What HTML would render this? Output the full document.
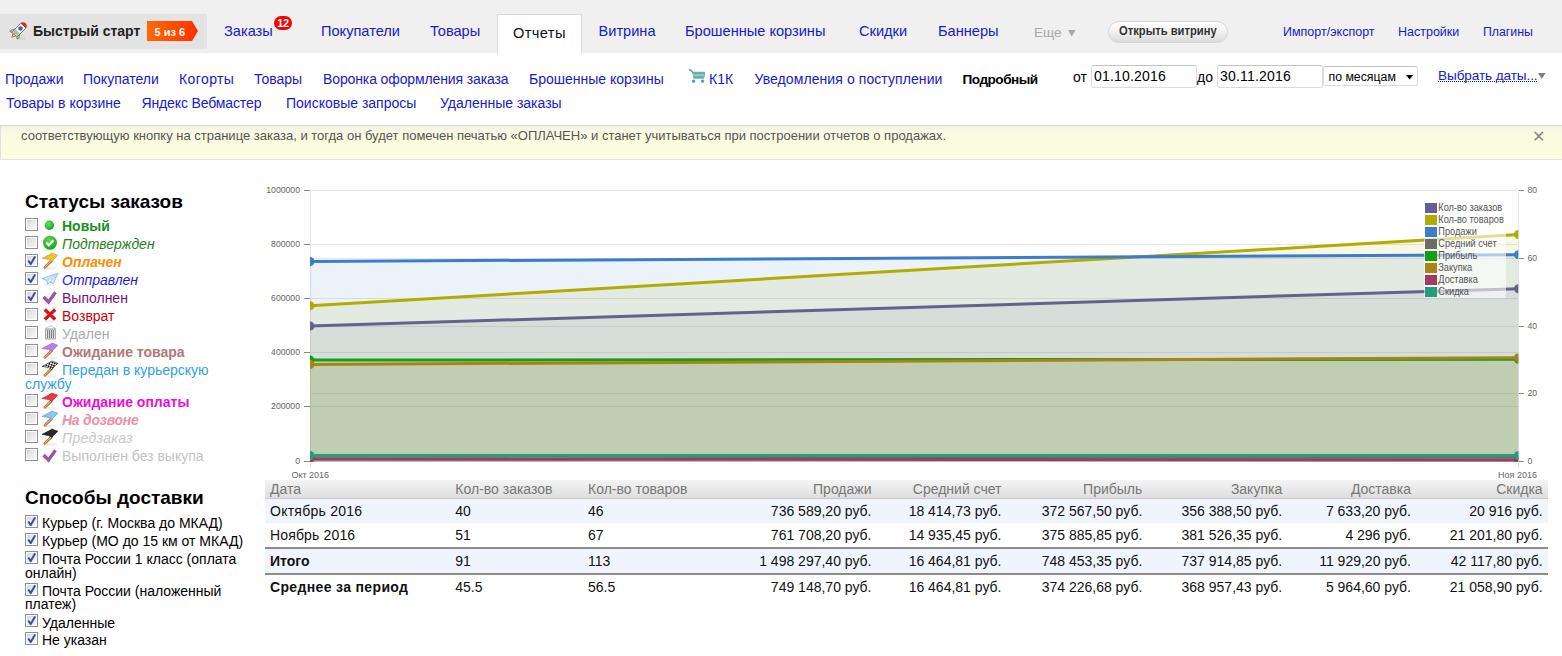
<!DOCTYPE html>
<html><head><meta charset="utf-8">
<style>
*{box-sizing:border-box}
html,body{margin:0;padding:0;width:1562px;height:656px;overflow:hidden;background:#fff;font-family:"Liberation Sans",sans-serif;}
.a{position:absolute;white-space:nowrap;line-height:1}
a,.lk{color:#1420cc;text-decoration:none}
#top{position:absolute;left:0;top:0;width:1562px;height:53px;background:#f0f0f0}
#qs{position:absolute;left:0;top:14px;width:207px;height:35px;background:#e3e3e3}
.tn{font-size:14.6px;top:24.3px}
.sn{font-size:14px}
#note{position:absolute;left:0;top:125px;width:1562px;height:35px;background:linear-gradient(#f3f3e3,#fbfbe2 9px,#fdfde0);border-top:1px solid #d8d8d8;border-bottom:1px solid #e4e4e0;border-left:1px solid #e0e0e0}
.st{font-size:14px}
.cb{position:absolute;width:13px;height:13px;border:1px solid #8f8f8f;background:linear-gradient(135deg,#cfd3da 0%,#e9eaec 50%,#fbfbfb 100%);box-shadow:inset 0 0 0 1px #fff}
.cb svg{position:absolute;left:-1px;top:-1px}
table{border-collapse:collapse}
</style></head><body>
<div id="top">
  <div id="qs"></div>
</div>
<!-- rocket -->
<svg class="a" style="left:8px;top:19px" width="22" height="22" viewBox="-11 -11 22 22">
 <ellipse cx="2" cy="8.5" rx="5" ry="1.3" fill="#000" fill-opacity="0.07"/>
 <g transform="rotate(45) translate(0,0.5)">
  <path d="M-2.3 6 L0 10.5 L2.3 6 Z" fill="#f04020"/>
  <path d="M-1.3 6 L0 9 L1.3 6 Z" fill="#ffd040"/>
  <path d="M-3.5 1.5 L-5.5 5.5 L-5.5 7 L-3 6 Z M3.5 1.5 L5.5 5.5 L5.5 7 L3 6 Z" fill="#c8d0c8" stroke="#6a6a6a" stroke-width="0.8"/>
  <rect x="-3.5" y="-7" width="7" height="13" rx="0.8" fill="#f2f2f4" stroke="#6e6e6e" stroke-width="0.9"/>
  <rect x="-3" y="1.5" width="6" height="4" fill="#a8c2a2"/>
  <path d="M-3.5 -6.5 L-3.5 -8 Q0 -12 3.5 -8 L3.5 -6.5 Z" fill="#de2a22"/>
  <circle cx="0" cy="-2.6" r="1.9" fill="#4a64b0" stroke="#334" stroke-width="0.4"/>
 </g>
</svg>
<div class="a" style="left:33px;top:24px;font-size:14px;font-weight:bold;color:#222">Быстрый старт</div>
<svg class="a" style="left:147px;top:21px" width="51" height="20" viewBox="0 0 51 20">
  <defs><linearGradient id="og" x1="0" x2="1"><stop offset="0" stop-color="#ff6a00"/><stop offset="1" stop-color="#ff3000"/></linearGradient></defs>
  <path d="M0 0 H45 L51 10 L45 20 H0 Z" fill="url(#og)"/>
</svg>
<div class="a" style="left:154.5px;top:27px;font-size:11px;font-weight:bold;color:#fff">5 из 6</div>

<div class="a lk tn" style="left:224px">Заказы</div>
<div class="a" style="left:274px;top:16px;width:18px;height:14px;border-radius:7px;background:#f60000;color:#fff;font-size:11px;font-weight:bold;text-align:center;line-height:14px;letter-spacing:-0.3px">12</div>
<div class="a lk tn" style="left:321px">Покупатели</div>
<div class="a lk tn" style="left:430px">Товары</div>
<div class="a" style="left:497px;top:14px;width:85px;height:40px;background:#fff;border:1px solid #dadada;border-bottom:none"></div>
<div class="a tn" style="left:513px;top:25.5px;color:#111;letter-spacing:0.4px">Отчеты</div>
<div class="a lk tn" style="left:598.5px">Витрина</div>
<div class="a lk tn" style="left:685px">Брошенные корзины</div>
<div class="a lk tn" style="left:859px">Скидки</div>
<div class="a lk tn" style="left:938px">Баннеры</div>
<div class="a tn" style="left:1034px;color:#a8a8a8;font-size:13.6px;top:25.8px">Еще</div><svg class="a" style="left:1067.5px;top:29.5px" width="8" height="7"><path d="M0 0H7.5L3.75 6.5Z" fill="#a8a8a8"/></svg>
<div class="a" style="left:1108px;top:21px;width:120px;height:22px;border-radius:11px;background:linear-gradient(#ffffff,#f3f3f3 45%,#dadada);border:1px solid #d6d6d6"></div>
<div class="a" style="left:1119px;top:25.4px;font-size:12.6px;font-weight:bold;color:#333;transform:scaleX(0.89);transform-origin:0 0">Открыть витрину</div>
<div class="a lk" style="left:1283px;top:26.3px;font-size:12.5px">Импорт/экспорт</div>
<div class="a lk" style="left:1398px;top:26.3px;font-size:12.5px">Настройки</div>
<div class="a lk" style="left:1483px;top:26.3px;font-size:12.3px">Плагины</div>

<!-- subnav -->
<div class="a lk sn" style="left:5px;top:72px">Продажи</div>
<div class="a lk sn" style="left:83px;top:72px">Покупатели</div>
<div class="a lk sn" style="left:179px;top:72px;letter-spacing:0.4px">Когорты</div>
<div class="a lk sn" style="left:254px;top:72px">Товары</div>
<div class="a lk sn" style="left:323px;top:72px;letter-spacing:-0.12px">Воронка оформления заказа</div>
<div class="a lk sn" style="left:529px;top:72px">Брошенные корзины</div>
<div class="a lk sn" style="left:709px;top:72px">К1К</div><svg class="a" style="left:688px;top:69px" width="18" height="14" viewBox="0 0 18 14"><path d="M0.8 1 H2.5 L4.8 3.5" stroke="#4a9e9c" stroke-width="1.4" fill="none"/><path d="M4 2.8 H17 V6.2 L16 9.8 H5.6 Z" fill="#62b0ae"/><path d="M5 5.4 H16.4 V6.6 H5.3 Z" fill="#bfe0de"/><circle cx="5.6" cy="12.2" r="1.6" fill="#4fa3a1"/><circle cx="14.6" cy="12.2" r="1.6" fill="#4fa3a1"/></svg>
<div class="a lk sn" style="left:754.5px;top:72px;letter-spacing:0.08px">Уведомления о поступлении</div>
<div class="a" style="left:962.5px;top:73px;font-size:13.6px;letter-spacing:-0.5px;font-weight:bold;color:#000">Подробный</div>
<div class="a lk sn" style="left:6px;top:96px">Товары в корзине</div>
<div class="a lk sn" style="left:141.5px;top:96px;letter-spacing:-0.13px">Яндекс Вебмастер</div>
<div class="a lk sn" style="left:286px;top:96px">Поисковые запросы</div>
<div class="a lk sn" style="left:440px;top:96px">Удаленные заказы</div>

<div class="a sn" style="left:1073px;top:70px;color:#000">от</div>
<div class="a" style="left:1091px;top:65px;width:106px;height:23px;border:1px solid #dcdcdc;border-top-color:#c4c4c4;border-radius:3px;background:#fff"></div>
<div class="a sn" style="left:1094px;top:69px;color:#000;letter-spacing:0.2px">01.10.2016</div>
<div class="a sn" style="left:1197px;top:70px;color:#000">до</div>
<div class="a" style="left:1217px;top:65px;width:106px;height:23px;border:1px solid #dcdcdc;border-top-color:#c4c4c4;border-radius:3px;background:#fff"></div>
<div class="a sn" style="left:1220px;top:69px;color:#000;letter-spacing:0.2px">30.11.2016</div>
<div class="a" style="left:1323px;top:66px;width:95px;height:20px;border:1px solid #dcdcdc;border-top-color:#c4c4c4;border-radius:3px;background:#fff"></div>
<div class="a" style="left:1328.5px;top:70.5px;font-size:12.3px;color:#000">по месяцам</div>
<svg class="a" style="left:1406px;top:74.5px" width="8" height="5"><path d="M0 0H7.2L3.6 4.6Z" fill="#000"/></svg>
<div class="a lk" style="left:1438px;top:69px;font-size:13.6px;letter-spacing:-0.1px">Выбрать даты...</div><div class="a" style="left:1438px;top:80.6px;width:99px;height:0;border-top:1px dotted #1420cc"></div>
<svg class="a" style="left:1538.3px;top:73px" width="8" height="7"><path d="M0 0H7.6L3.8 6Z" fill="#808080"/></svg>

<div id="note"></div>
<div class="a" style="left:21px;top:129px;font-size:13px;color:#555">соответствующую кнопку на странице заказа, и тогда он будет помечен печатью «ОПЛАЧЕН» и станет учитываться при построении отчетов о продажах.</div>
<div class="a" style="left:1532.4px;top:129px;font-size:16px;color:#868686">✕</div>

<!-- SIDEBAR -->
<div class="a" style="left:25px;top:191.9px;font-size:19px;font-weight:bold;color:#000">Статусы заказов</div>
<div class="cb" style="left:25px;top:218.0px"></div>
<svg class="a" style="left:40px;top:214.0px" width="20" height="20" viewBox="0 0 20 20"><defs><radialGradient id="gd" cx="0.4" cy="0.35" r="0.7"><stop offset="0" stop-color="#6ee06e"/><stop offset="1" stop-color="#12a012"/></radialGradient></defs><circle cx="9.4" cy="11.3" r="4.7" fill="url(#gd)"/></svg>
<div class="a" style="left:62px;top:219.1px;font-size:14px;color:#1a8f1a;font-weight:bold">Новый</div>
<div class="cb" style="left:25px;top:236.0px"></div>
<svg class="a" style="left:40px;top:232.0px" width="20" height="20" viewBox="0 0 20 20"><defs><radialGradient id="gc" cx="0.45" cy="0.3" r="0.75"><stop offset="0" stop-color="#5fd85f"/><stop offset="1" stop-color="#0fa00f"/></radialGradient></defs><ellipse cx="10" cy="17.8" rx="6" ry="1" fill="#000" fill-opacity="0.08"/><circle cx="10" cy="10.8" r="7" fill="url(#gc)"/><path d="M6.2 10.6 L8.7 13.2 L13.3 8.4" stroke="#fff" stroke-width="2.3" fill="none"/></svg>
<div class="a" style="left:62px;top:237.1px;font-size:14px;color:#1f7f1f;font-style:italic">Подтвержден</div>
<div class="cb" style="left:25px;top:254.0px"><svg width="13" height="13" viewBox="0 0 13 13"><path d="M3.7 7.2 L5.8 10.1 L9.8 3" stroke="#3b4f9e" stroke-width="2" fill="none" stroke-linecap="round" stroke-linejoin="round"/></svg></div>
<svg class="a" style="left:40px;top:250.0px" width="20" height="20" viewBox="0 0 20 20"><ellipse cx="11" cy="18.3" rx="7" ry="1.2" fill="#000" fill-opacity="0.07"/><path d="M11.3 11 L4.9 17.3" stroke="#a86c32" stroke-width="2.7" stroke-linecap="round"/><path d="M11.1 10.9 L4.9 17.1" stroke="#e2b070" stroke-width="1.3" stroke-linecap="round"/><path d="M2 8.4 L10 4.3 L11.8 3 L17.8 5.2 L11.8 11.4 L8.5 9.6 Z" fill="#f0c030" stroke="#d8a010" stroke-width="0.6"/></svg>
<div class="a" style="left:62px;top:255.1px;font-size:14px;color:#ff8c00;font-weight:bold;font-style:italic">Оплачен</div>
<div class="cb" style="left:25px;top:272.0px"><svg width="13" height="13" viewBox="0 0 13 13"><path d="M3.7 7.2 L5.8 10.1 L9.8 3" stroke="#3b4f9e" stroke-width="2" fill="none" stroke-linecap="round" stroke-linejoin="round"/></svg></div>
<svg class="a" style="left:40px;top:268.0px" width="20" height="20" viewBox="0 0 20 20"><ellipse cx="9" cy="17" rx="6" ry="1" fill="#000" fill-opacity="0.07"/><path d="M18.2 5 L2 10.6 L6.6 12.4 L7.6 16.2 L10 14 L13.2 15.6 Z" fill="#d4ecf8" stroke="#86bede" stroke-width="0.9" stroke-linejoin="round"/><path d="M18.2 5 L6.6 12.4 M18.2 5 L10 14" stroke="#9ccbe6" stroke-width="0.7"/></svg>
<div class="a" style="left:62px;top:273.1px;font-size:14px;color:#1d1ddd;font-style:italic">Отправлен</div>
<div class="cb" style="left:25px;top:290.0px"><svg width="13" height="13" viewBox="0 0 13 13"><path d="M3.7 7.2 L5.8 10.1 L9.8 3" stroke="#3b4f9e" stroke-width="2" fill="none" stroke-linecap="round" stroke-linejoin="round"/></svg></div>
<svg class="a" style="left:40px;top:286.0px" width="20" height="20" viewBox="0 0 20 20"><ellipse cx="10" cy="18" rx="6" ry="1" fill="#000" fill-opacity="0.07"/><path d="M3.6 11 L8.5 16 L15.5 6.2" stroke="#9a55a6" stroke-width="3.3" fill="none"/></svg>
<div class="a" style="left:62px;top:291.1px;font-size:14px;color:#800a80">Выполнен</div>
<div class="cb" style="left:25px;top:308.0px"></div>
<svg class="a" style="left:40px;top:304.0px" width="20" height="20" viewBox="0 0 20 20"><ellipse cx="10" cy="17.5" rx="6" ry="1" fill="#000" fill-opacity="0.07"/><path d="M4.8 5.6 L15.2 15.4 M15.2 5.6 L4.8 15.4" stroke="#cf1b1b" stroke-width="3.4"/></svg>
<div class="a" style="left:62px;top:309.1px;font-size:14px;color:#cc0000">Возврат</div>
<div class="cb" style="left:25px;top:325.5px"></div>
<svg class="a" style="left:40px;top:321.5px" width="20" height="20" viewBox="0 0 20 20"><path d="M5.6 7 H15.4 V17 H5.6 Z" fill="#e2e2e2" stroke="#8a8a8a" stroke-width="0.8"/><path d="M7.6 8 V16 M9.6 8 V16 M11.5 8 V16 M13.4 8 V16" stroke="#7a7a7a" stroke-width="1"/><path d="M5 6.5 L10.5 3.8 L16 6.5 Z" fill="#fff" stroke="#a8c8c0" stroke-width="0.8"/></svg>
<div class="a" style="left:62px;top:326.6px;font-size:14px;color:#aaaaaa">Удален</div>
<div class="cb" style="left:25px;top:343.5px"></div>
<svg class="a" style="left:40px;top:339.5px" width="20" height="20" viewBox="0 0 20 20"><ellipse cx="11" cy="18.3" rx="7" ry="1.2" fill="#000" fill-opacity="0.07"/><path d="M11.3 11 L4.9 17.3" stroke="#a86c32" stroke-width="2.7" stroke-linecap="round"/><path d="M11.1 10.9 L4.9 17.1" stroke="#e2b070" stroke-width="1.3" stroke-linecap="round"/><path d="M2 8.4 L10 4.3 L11.8 3 L17.8 5.2 L11.8 11.4 L8.5 9.6 Z" fill="#b883dc" stroke="#9a60c8" stroke-width="0.6"/></svg>
<div class="a" style="left:62px;top:344.6px;font-size:14px;color:#b07878;font-weight:bold">Ожидание товара</div>
<div class="cb" style="left:25px;top:362.0px"></div>
<svg class="a" style="left:40px;top:358.0px" width="20" height="20" viewBox="0 0 20 20"><ellipse cx="11" cy="18.3" rx="7" ry="1.2" fill="#000" fill-opacity="0.07"/><path d="M11.3 11 L4.9 17.3" stroke="#a86c32" stroke-width="2.7" stroke-linecap="round"/><path d="M11.1 10.9 L4.9 17.1" stroke="#e2b070" stroke-width="1.3" stroke-linecap="round"/><defs><pattern id="chk" width="3.4" height="3.4" patternUnits="userSpaceOnUse" patternTransform="rotate(-25)"><rect width="3.4" height="3.4" fill="#fff"/><rect width="1.7" height="1.7" fill="#111"/><rect x="1.7" y="1.7" width="1.7" height="1.7" fill="#111"/></pattern></defs><path d="M2 8.4 L10 4.3 L11.8 3 L17.8 5.2 L11.8 11.4 L8.5 9.6 Z" fill="url(#chk)" stroke="#222" stroke-width="0.6"/></svg>
<div class="a" style="left:62px;top:363.1px;font-size:14px;color:#2ea0e8">Передан в курьерскую</div>
<div class="cb" style="left:25px;top:393.5px"></div>
<svg class="a" style="left:40px;top:389.5px" width="20" height="20" viewBox="0 0 20 20"><ellipse cx="11" cy="18.3" rx="7" ry="1.2" fill="#000" fill-opacity="0.07"/><path d="M11.3 11 L4.9 17.3" stroke="#a86c32" stroke-width="2.7" stroke-linecap="round"/><path d="M11.1 10.9 L4.9 17.1" stroke="#e2b070" stroke-width="1.3" stroke-linecap="round"/><path d="M2 8.4 L10 4.3 L11.8 3 L17.8 5.2 L11.8 11.4 L8.5 9.6 Z" fill="#e23c44" stroke="#c82028" stroke-width="0.6"/></svg>
<div class="a" style="left:62px;top:394.6px;font-size:14px;color:#f00cd8;font-weight:bold">Ожидание оплаты</div>
<div class="cb" style="left:25px;top:412.0px"></div>
<svg class="a" style="left:40px;top:408.0px" width="20" height="20" viewBox="0 0 20 20"><ellipse cx="11" cy="18.3" rx="7" ry="1.2" fill="#000" fill-opacity="0.07"/><path d="M11.3 11 L4.9 17.3" stroke="#a86c32" stroke-width="2.7" stroke-linecap="round"/><path d="M11.1 10.9 L4.9 17.1" stroke="#e2b070" stroke-width="1.3" stroke-linecap="round"/><path d="M2 8.4 L10 4.3 L11.8 3 L17.8 5.2 L11.8 11.4 L8.5 9.6 Z" fill="#8cc4f0" stroke="#4f94d0" stroke-width="0.6"/></svg>
<div class="a" style="left:62px;top:413.1px;font-size:14px;color:#ee90a8;font-weight:bold;font-style:italic;letter-spacing:-0.25px">На дозвоне</div>
<div class="cb" style="left:25px;top:429.8px"></div>
<svg class="a" style="left:40px;top:425.8px" width="20" height="20" viewBox="0 0 20 20"><ellipse cx="11" cy="18.3" rx="7" ry="1.2" fill="#000" fill-opacity="0.07"/><path d="M11.3 11 L4.9 17.3" stroke="#a86c32" stroke-width="2.7" stroke-linecap="round"/><path d="M11.1 10.9 L4.9 17.1" stroke="#e2b070" stroke-width="1.3" stroke-linecap="round"/><path d="M2 8.4 L10 4.3 L11.8 3 L17.8 5.2 L11.8 11.4 L8.5 9.6 Z" fill="#2a2a2a" stroke="#111" stroke-width="0.6"/></svg>
<div class="a" style="left:62px;top:430.9px;font-size:14px;color:#c6c6c6;font-style:italic;letter-spacing:0.3px">Предзаказ</div>
<div class="cb" style="left:25px;top:447.8px"></div>
<svg class="a" style="left:40px;top:443.8px" width="20" height="20" viewBox="0 0 20 20"><ellipse cx="10" cy="18" rx="6" ry="1" fill="#000" fill-opacity="0.07"/><path d="M3.6 11 L8.5 16 L15.5 6.2" stroke="#9a55a6" stroke-width="3.3" fill="none"/></svg>
<div class="a" style="left:62px;top:448.9px;font-size:14px;color:#c2c2c2">Выполнен без выкупа</div>
<div class="a" style="left:25px;top:377.1px;font-size:14px;color:#2ea0e8">службу</div>
<div class="a" style="left:25px;top:487.5px;font-size:19px;font-weight:bold;color:#000">Способы доставки</div>
<div class="cb" style="left:25px;top:515.0px"><svg width="13" height="13" viewBox="0 0 13 13"><path d="M3.7 7.2 L5.8 10.1 L9.8 3" stroke="#3b4f9e" stroke-width="2" fill="none" stroke-linecap="round" stroke-linejoin="round"/></svg></div>
<div class="a" style="left:42px;top:516.1px;font-size:14px;color:#000">Курьер (г. Москва до МКАД)</div>
<div class="cb" style="left:25px;top:533.0px"><svg width="13" height="13" viewBox="0 0 13 13"><path d="M3.7 7.2 L5.8 10.1 L9.8 3" stroke="#3b4f9e" stroke-width="2" fill="none" stroke-linecap="round" stroke-linejoin="round"/></svg></div>
<div class="a" style="left:42px;top:534.1px;font-size:14px;color:#000">Курьер (МО до 15 км от МКАД)</div>
<div class="cb" style="left:25px;top:551.0px"><svg width="13" height="13" viewBox="0 0 13 13"><path d="M3.7 7.2 L5.8 10.1 L9.8 3" stroke="#3b4f9e" stroke-width="2" fill="none" stroke-linecap="round" stroke-linejoin="round"/></svg></div>
<div class="a" style="left:42px;top:552.1px;font-size:14px;color:#000">Почта России 1 класс (оплата</div>
<div class="a" style="left:25px;top:565.7px;font-size:14px;color:#000">онлайн)</div>
<div class="cb" style="left:25px;top:582.6px"><svg width="13" height="13" viewBox="0 0 13 13"><path d="M3.7 7.2 L5.8 10.1 L9.8 3" stroke="#3b4f9e" stroke-width="2" fill="none" stroke-linecap="round" stroke-linejoin="round"/></svg></div>
<div class="a" style="left:42px;top:583.7px;font-size:14px;color:#000">Почта России (наложенный</div>
<div class="a" style="left:25px;top:597.3px;font-size:14px;color:#000">платеж)</div>
<div class="cb" style="left:25px;top:614.3px"><svg width="13" height="13" viewBox="0 0 13 13"><path d="M3.7 7.2 L5.8 10.1 L9.8 3" stroke="#3b4f9e" stroke-width="2" fill="none" stroke-linecap="round" stroke-linejoin="round"/></svg></div>
<div class="a" style="left:42px;top:616.1px;font-size:14px;color:#000">Удаленные</div>
<div class="cb" style="left:25px;top:631.6px"><svg width="13" height="13" viewBox="0 0 13 13"><path d="M3.7 7.2 L5.8 10.1 L9.8 3" stroke="#3b4f9e" stroke-width="2" fill="none" stroke-linecap="round" stroke-linejoin="round"/></svg></div>
<div class="a" style="left:42px;top:633.4px;font-size:14px;color:#000">Не указан</div>

<!-- CHART -->
<svg class="a" style="left:0;top:0" width="1562" height="656" viewBox="0 0 1562 656">
<defs><clipPath id="pc"><rect x="310" y="185" width="1208.2" height="277"/></clipPath></defs>
<line x1="310" x2="1518.5" y1="190.5" y2="190.5" stroke="#e6e6e6" stroke-width="1"/>
<line x1="310" x2="1518.5" y1="244.5" y2="244.5" stroke="#e6e6e6" stroke-width="1"/>
<line x1="310" x2="1518.5" y1="298.5" y2="298.5" stroke="#e6e6e6" stroke-width="1"/>
<line x1="310" x2="1518.5" y1="352.5" y2="352.5" stroke="#e6e6e6" stroke-width="1"/>
<line x1="310" x2="1518.5" y1="406.5" y2="406.5" stroke="#e6e6e6" stroke-width="1"/>
<line x1="310" x2="1518.5" y1="461.5" y2="461.5" stroke="#e6e6e6" stroke-width="1"/>
<line x1="310" x2="1518.5" y1="190.5" y2="190.5" stroke="#e6e6e6" stroke-width="1"/>
<line x1="310" x2="1518.5" y1="258.5" y2="258.5" stroke="#e6e6e6" stroke-width="1"/>
<line x1="310" x2="1518.5" y1="326.5" y2="326.5" stroke="#e6e6e6" stroke-width="1"/>
<line x1="310" x2="1518.5" y1="393.5" y2="393.5" stroke="#e6e6e6" stroke-width="1"/>
<line x1="310" x2="1518.5" y1="461.5" y2="461.5" stroke="#e6e6e6" stroke-width="1"/>
<line x1="310.5" x2="310.5" y1="190" y2="467" stroke="#e4e4e4"/>
<line x1="1518.5" x2="1518.5" y1="190" y2="467" stroke="#e4e4e4"/>
<g clip-path="url(#pc)">
<path d="M310.0 326.0 L1518.5 288.7 L1518.5 461.5 L310.0 461.5 Z" fill="#675e94" fill-opacity="0.1"/>
<path d="M310.0 305.7 L1518.5 234.5 L1518.5 461.5 L310.0 461.5 Z" fill="#b3ac00" fill-opacity="0.1"/>
<path d="M310.0 261.5 L1518.5 254.7 L1518.5 461.5 L310.0 461.5 Z" fill="#3d7cc9" fill-opacity="0.1"/>
<path d="M310.0 456.1 L1518.5 457.1 L1518.5 461.5 L310.0 461.5 Z" fill="#6b6b6b" fill-opacity="0.1"/>
<path d="M310.0 360.1 L1518.5 359.2 L1518.5 461.5 L310.0 461.5 Z" fill="#12a012" fill-opacity="0.1"/>
<path d="M310.0 364.5 L1518.5 357.7 L1518.5 461.5 L310.0 461.5 Z" fill="#a88418" fill-opacity="0.1"/>
<path d="M310.0 459.0 L1518.5 459.9 L1518.5 461.5 L310.0 461.5 Z" fill="#a53a60" fill-opacity="0.1"/>
<path d="M310.0 455.4 L1518.5 455.4 L1518.5 461.5 L310.0 461.5 Z" fill="#1fa07a" fill-opacity="0.1"/>
<path d="M310.0 456.1 L1518.5 457.1" stroke="#6b6b6b" stroke-width="3" fill="none"/>
<circle cx="310.0" cy="456.1" r="4.5" fill="#6b6b6b"/><circle cx="1518.5" cy="457.1" r="4.5" fill="#6b6b6b"/>
<path d="M310.0 326.0 L1518.5 288.7" stroke="#63628c" stroke-width="3" fill="none"/>
<circle cx="310.0" cy="326.0" r="4.5" fill="#63628c"/><circle cx="1518.5" cy="288.7" r="4.5" fill="#63628c"/>
<path d="M310.0 305.7 L1518.5 234.5" stroke="#b3ac00" stroke-width="3" fill="none"/>
<circle cx="310.0" cy="305.7" r="4.5" fill="#b3ac00"/><circle cx="1518.5" cy="234.5" r="4.5" fill="#b3ac00"/>
<path d="M310.0 261.5 L1518.5 254.7" stroke="#3d7cc9" stroke-width="3" fill="none"/>
<circle cx="310.0" cy="261.5" r="4.5" fill="#3d7cc9"/><circle cx="1518.5" cy="254.7" r="4.5" fill="#3d7cc9"/>
<path d="M310.0 360.1 L1518.5 359.2" stroke="#12a012" stroke-width="3" fill="none"/>
<circle cx="310.0" cy="360.1" r="4.5" fill="#12a012"/><circle cx="1518.5" cy="359.2" r="4.5" fill="#12a012"/>
<path d="M310.0 364.5 L1518.5 357.7" stroke="#a88418" stroke-width="3" fill="none"/>
<circle cx="310.0" cy="364.5" r="4.5" fill="#a88418"/><circle cx="1518.5" cy="357.7" r="4.5" fill="#a88418"/>
<path d="M310.0 459.0 L1518.5 459.9" stroke="#a53a60" stroke-width="3" fill="none"/>
<circle cx="310.0" cy="459.0" r="4.5" fill="#a53a60"/><circle cx="1518.5" cy="459.9" r="4.5" fill="#a53a60"/>
<path d="M310.0 455.4 L1518.5 455.4" stroke="#1fa07a" stroke-width="3" fill="none"/>
<circle cx="310.0" cy="455.4" r="4.5" fill="#1fa07a"/><circle cx="1518.5" cy="455.4" r="4.5" fill="#1fa07a"/>
</g>
<line x1="304" x2="310" y1="190.5" y2="190.5" stroke="#888"/>
<text transform="translate(300,193.3) scale(0.885,1)" text-anchor="end" font-size="9.8" fill="#666" font-family="Liberation Sans">1000000</text>
<line x1="304" x2="310" y1="244.5" y2="244.5" stroke="#888"/>
<text transform="translate(300,247.3) scale(0.885,1)" text-anchor="end" font-size="9.8" fill="#666" font-family="Liberation Sans">800000</text>
<line x1="304" x2="310" y1="298.5" y2="298.5" stroke="#888"/>
<text transform="translate(300,301.3) scale(0.885,1)" text-anchor="end" font-size="9.8" fill="#666" font-family="Liberation Sans">600000</text>
<line x1="304" x2="310" y1="352.5" y2="352.5" stroke="#888"/>
<text transform="translate(300,355.3) scale(0.885,1)" text-anchor="end" font-size="9.8" fill="#666" font-family="Liberation Sans">400000</text>
<line x1="304" x2="310" y1="406.5" y2="406.5" stroke="#888"/>
<text transform="translate(300,409.3) scale(0.885,1)" text-anchor="end" font-size="9.8" fill="#666" font-family="Liberation Sans">200000</text>
<line x1="304" x2="310" y1="461.5" y2="461.5" stroke="#888"/>
<text transform="translate(300,464.3) scale(0.885,1)" text-anchor="end" font-size="9.8" fill="#666" font-family="Liberation Sans">0</text>
<line x1="1519" x2="1524" y1="190.5" y2="190.5" stroke="#888"/>
<text transform="translate(1527.5,192.9) scale(0.885,1)" font-size="9.8" fill="#666" font-family="Liberation Sans">80</text>
<line x1="1519" x2="1524" y1="258.5" y2="258.5" stroke="#888"/>
<text transform="translate(1527.5,260.9) scale(0.885,1)" font-size="9.8" fill="#666" font-family="Liberation Sans">60</text>
<line x1="1519" x2="1524" y1="326.5" y2="326.5" stroke="#888"/>
<text transform="translate(1527.5,328.9) scale(0.885,1)" font-size="9.8" fill="#666" font-family="Liberation Sans">40</text>
<line x1="1519" x2="1524" y1="393.5" y2="393.5" stroke="#888"/>
<text transform="translate(1527.5,395.9) scale(0.885,1)" font-size="9.8" fill="#666" font-family="Liberation Sans">20</text>
<line x1="1519" x2="1524" y1="461.5" y2="461.5" stroke="#888"/>
<text transform="translate(1527.5,463.9) scale(0.885,1)" font-size="9.8" fill="#666" font-family="Liberation Sans">0</text>
<text x="291.4" y="478.4" font-size="9" fill="#666" font-family="Liberation Sans">Окт 2016</text>
<text x="1498" y="478.4" font-size="9" fill="#666" font-family="Liberation Sans">Ноя 2016</text>
<rect x="1424" y="202" width="82" height="96" fill="#fff" fill-opacity="0.6"/>
<rect x="1425" y="203" width="12" height="10" fill="#675e94"/>
<text transform="translate(1438.3,211.4) scale(0.922,1)" x="0" y="0" font-size="10" fill="#555" font-family="Liberation Sans">Кол-во заказов</text>
<rect x="1425" y="215" width="12" height="10" fill="#b3ac00"/>
<text transform="translate(1438.3,223.4) scale(0.922,1)" x="0" y="0" font-size="10" fill="#555" font-family="Liberation Sans">Кол-во товаров</text>
<rect x="1425" y="227" width="12" height="10" fill="#3d7cc9"/>
<text transform="translate(1438.3,235.4) scale(0.922,1)" x="0" y="0" font-size="10" fill="#555" font-family="Liberation Sans">Продажи</text>
<rect x="1425" y="239" width="12" height="10" fill="#6b6b6b"/>
<text transform="translate(1438.3,247.4) scale(0.922,1)" x="0" y="0" font-size="10" fill="#555" font-family="Liberation Sans">Средний счет</text>
<rect x="1425" y="251" width="12" height="10" fill="#12a012"/>
<text transform="translate(1438.3,259.4) scale(0.922,1)" x="0" y="0" font-size="10" fill="#555" font-family="Liberation Sans">Прибыль</text>
<rect x="1425" y="263" width="12" height="10" fill="#a88418"/>
<text transform="translate(1438.3,271.4) scale(0.922,1)" x="0" y="0" font-size="10" fill="#555" font-family="Liberation Sans">Закупка</text>
<rect x="1425" y="275" width="12" height="10" fill="#a53a60"/>
<text transform="translate(1438.3,283.4) scale(0.922,1)" x="0" y="0" font-size="10" fill="#555" font-family="Liberation Sans">Доставка</text>
<rect x="1425" y="287" width="12" height="10" fill="#1fa07a"/>
<text transform="translate(1438.3,295.4) scale(0.922,1)" x="0" y="0" font-size="10" fill="#555" font-family="Liberation Sans">Скидка</text>
</svg>

<!-- TABLE -->
<div class="a" style="left:265px;top:480px;width:1283px;height:19px;background:linear-gradient(#f4f4f4,#dedede);border-bottom:1px solid #c8c8c8"></div>
<div class="a" style="left:265px;top:499px;width:1283px;height:24px;background:#f0f5fd"></div>
<div class="a" style="left:265px;top:547px;width:1283px;height:2px;background:#8c8c8c"></div>
<div class="a" style="left:265px;top:549px;width:1283px;height:24px;background:#f0f5fd"></div>
<div class="a" style="left:265px;top:573px;width:1283px;height:2px;background:#8c8c8c"></div>
<div class="a" style="left:270px;top:482.3px;font-size:14px;color:#777">Дата</div>
<div class="a" style="left:455.3px;top:482.3px;font-size:14px;color:#777">Кол-во заказов</div>
<div class="a" style="left:588px;top:482.3px;font-size:14px;color:#777">Кол-во товаров</div>
<div class="a" style="right:690.5px;top:482.3px;font-size:14px;color:#777">Продажи</div>
<div class="a" style="right:560.5px;top:482.3px;font-size:14px;color:#777">Средний счет</div>
<div class="a" style="right:419.7px;top:482.3px;font-size:14px;color:#777">Прибыль</div>
<div class="a" style="right:279.8px;top:482.3px;font-size:14px;color:#777">Закупка</div>
<div class="a" style="right:151.0px;top:482.3px;font-size:14px;color:#777">Доставка</div>
<div class="a" style="right:19.4px;top:482.3px;font-size:14px;color:#777">Скидка</div>
<div class="a" style="left:270px;top:504.1px;font-size:14px;color:#111;letter-spacing:0.25px">Октябрь 2016</div>
<div class="a" style="left:455.3px;top:504.1px;font-size:14px;color:#111">40</div>
<div class="a" style="left:588px;top:504.1px;font-size:14px;color:#111">46</div>
<div class="a" style="right:690.5px;top:504.1px;font-size:14px;color:#111">736 589,20 руб.</div>
<div class="a" style="right:560.5px;top:504.1px;font-size:14px;color:#111">18 414,73 руб.</div>
<div class="a" style="right:419.7px;top:504.1px;font-size:14px;color:#111">372 567,50 руб.</div>
<div class="a" style="right:279.8px;top:504.1px;font-size:14px;color:#111">356 388,50 руб.</div>
<div class="a" style="right:151.0px;top:504.1px;font-size:14px;color:#111">7 633,20 руб.</div>
<div class="a" style="right:19.4px;top:504.1px;font-size:14px;color:#111">20 916 руб.</div>
<div class="a" style="left:270px;top:527.9px;font-size:14px;color:#111;letter-spacing:0.15px">Ноябрь 2016</div>
<div class="a" style="left:455.3px;top:527.9px;font-size:14px;color:#111">51</div>
<div class="a" style="left:588px;top:527.9px;font-size:14px;color:#111">67</div>
<div class="a" style="right:690.5px;top:527.9px;font-size:14px;color:#111">761 708,20 руб.</div>
<div class="a" style="right:560.5px;top:527.9px;font-size:14px;color:#111">14 935,45 руб.</div>
<div class="a" style="right:419.7px;top:527.9px;font-size:14px;color:#111">375 885,85 руб.</div>
<div class="a" style="right:279.8px;top:527.9px;font-size:14px;color:#111">381 526,35 руб.</div>
<div class="a" style="right:151.0px;top:527.9px;font-size:14px;color:#111">4 296 руб.</div>
<div class="a" style="right:19.4px;top:527.9px;font-size:14px;color:#111">21 201,80 руб.</div>
<div class="a" style="left:270px;top:554.1px;font-size:14px;color:#111;font-weight:bold">Итого</div>
<div class="a" style="left:455.3px;top:554.1px;font-size:14px;color:#111">91</div>
<div class="a" style="left:588px;top:554.1px;font-size:14px;color:#111">113</div>
<div class="a" style="right:690.5px;top:554.1px;font-size:14px;color:#111">1 498 297,40 руб.</div>
<div class="a" style="right:560.5px;top:554.1px;font-size:14px;color:#111">16 464,81 руб.</div>
<div class="a" style="right:419.7px;top:554.1px;font-size:14px;color:#111">748 453,35 руб.</div>
<div class="a" style="right:279.8px;top:554.1px;font-size:14px;color:#111">737 914,85 руб.</div>
<div class="a" style="right:151.0px;top:554.1px;font-size:14px;color:#111">11 929,20 руб.</div>
<div class="a" style="right:19.4px;top:554.1px;font-size:14px;color:#111">42 117,80 руб.</div>
<div class="a" style="left:270px;top:579.8px;font-size:14px;color:#111;font-weight:bold;letter-spacing:0.35px">Среднее за период</div>
<div class="a" style="left:455.3px;top:579.8px;font-size:14px;color:#111">45.5</div>
<div class="a" style="left:588px;top:579.8px;font-size:14px;color:#111">56.5</div>
<div class="a" style="right:690.5px;top:579.8px;font-size:14px;color:#111">749 148,70 руб.</div>
<div class="a" style="right:560.5px;top:579.8px;font-size:14px;color:#111">16 464,81 руб.</div>
<div class="a" style="right:419.7px;top:579.8px;font-size:14px;color:#111">374 226,68 руб.</div>
<div class="a" style="right:279.8px;top:579.8px;font-size:14px;color:#111">368 957,43 руб.</div>
<div class="a" style="right:151.0px;top:579.8px;font-size:14px;color:#111">5 964,60 руб.</div>
<div class="a" style="right:19.4px;top:579.8px;font-size:14px;color:#111">21 058,90 руб.</div>
</body></html>
